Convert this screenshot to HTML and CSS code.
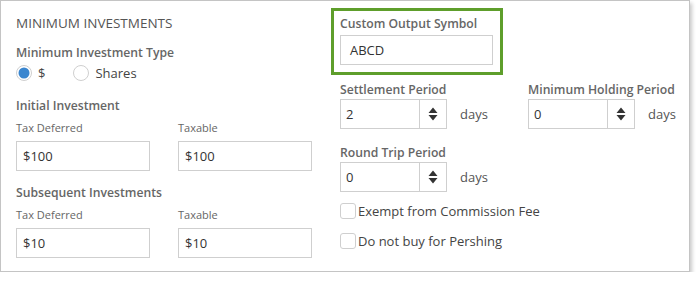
FILE: index.html
```html
<!DOCTYPE html>
<html>
<head>
<meta charset="utf-8">
<link rel="stylesheet" href="styles.css">
</head>
<body>
<div class="panel">
  <div class="left">
    <div class="title">MINIMUM INVESTMENTS</div>
    <div class="heading h-type">Minimum Investment Type</div>
    <div class="radios">
      <label class="radio">
        <svg width="16" height="16" viewBox="0 0 16 16"><circle cx="8" cy="8" r="7.5" fill="#fff" stroke="#cfcfcf"/><circle cx="8" cy="8" r="5.5" fill="#3a86cf"/></svg>
        <span>$</span>
      </label>
      <label class="radio">
        <svg width="16" height="16" viewBox="0 0 16 16"><circle cx="8" cy="8" r="7.5" fill="#fff" stroke="#cfcfcf"/></svg>
        <span>Shares</span>
      </label>
    </div>
    <div class="heading h-init">Initial Investment</div>
    <div class="pair">
      <div class="field">
        <div class="sub">Tax Deferred</div>
        <div class="input">$100</div>
      </div>
      <div class="field">
        <div class="sub">Taxable</div>
        <div class="input">$100</div>
      </div>
    </div>
    <div class="heading h-subs">Subsequent Investments</div>
    <div class="pair">
      <div class="field">
        <div class="sub">Tax Deferred</div>
        <div class="input">$10</div>
      </div>
      <div class="field">
        <div class="sub">Taxable</div>
        <div class="input">$10</div>
      </div>
    </div>
  </div>
  <div class="right">
    <div class="highlight">
      <div class="heading">Custom Output Symbol</div>
      <div class="input wide">ABCD</div>
    </div>
    <div class="grid">
      <div class="col col1">
        <div class="heading">Settlement Period</div>
        <div class="spin-row">
          <div class="spinner"><div class="val">2</div><div class="btn"><svg width="10" height="14" viewBox="0 0 10 14"><path d="M5 0.5 L9.5 6 H0.5 Z M0.5 8 H9.5 L5 13.5 Z" fill="#333"/></svg></div></div>
          <span class="days">days</span>
        </div>
        <div class="heading h-round">Round Trip Period</div>
        <div class="spin-row">
          <div class="spinner"><div class="val">0</div><div class="btn"><svg width="10" height="14" viewBox="0 0 10 14"><path d="M5 0.5 L9.5 6 H0.5 Z M0.5 8 H9.5 L5 13.5 Z" fill="#333"/></svg></div></div>
          <span class="days">days</span>
        </div>
        <label class="check c1"><span class="box"></span><span>Exempt from Commission Fee</span></label>
        <label class="check c2"><span class="box"></span><span>Do not buy for Pershing</span></label>
      </div>
      <div class="col">
        <div class="heading">Minimum Holding Period</div>
        <div class="spin-row">
          <div class="spinner"><div class="val">0</div><div class="btn"><svg width="10" height="14" viewBox="0 0 10 14"><path d="M5 0.5 L9.5 6 H0.5 Z M0.5 8 H9.5 L5 13.5 Z" fill="#333"/></svg></div></div>
          <span class="days">days</span>
        </div>
      </div>
    </div>
  </div>
</div>
</body>
</html>
```

FILE: styles.css
```css
* { box-sizing: border-box; }
body {
  margin: 0;
  background: #fff;
  font-family: "Open Sans", "Noto Sans", sans-serif;
  color: #555;
}
.panel {
  width: 690px;
  height: 272px;
  border: 1px solid #c4c4c4;
  box-shadow: 2px 3px 4px rgba(0,0,0,0.22);
  display: flex;
  background: #fff;
}
.left {
  width: 315px;
  flex-shrink: 0;
  padding: 12px 0 0 15px;
}
.title {
  font-size: 13.5px;
  line-height: 20px;
  color: #555;
}
.heading {
  font-size: 12.2px;
  font-weight: 600;
  line-height: 20px;
  padding-top: 2px;
  margin-bottom: -2px;
  color: #666;
  white-space: nowrap;
}
.h-type { margin-top: 8px; }
.radios {
  display: flex;
  height: 20px;
  align-items: center;
  margin-top: 2px;
}
.radio {
  display: flex;
  align-items: center;
  gap: 6px;
  font-size: 13px;
  color: #444;
  margin-right: 28px;
}
.radio svg { display: block; }
.h-init { margin-top: 11px; }
.h-subs { margin-top: 10px; }
.pair {
  display: flex;
  gap: 28px;
}
.field { width: 134px; }
.sub {
  font-size: 11px;
  line-height: 18px;
  color: #666;
  margin-top: 5px;
  margin-bottom: 4px;
}
.input {
  height: 30px;
  border: 1px solid #cfcfcf;
  padding: 0 6px;
  font-size: 13px;
  line-height: 28px;
  color: #333;
}
.right {
  padding: 7px 0 0 15px;
  flex: 1;
  min-width: 0;
}
.highlight {
  width: 172px;
  border: 3px solid #5e9e2b;
  padding: 1px 7px 7px 6px;
}
.highlight .input { padding: 0 9px; }
.heading + .input { margin-top: 3px; }
.grid {
  display: flex;
  padding-left: 9px;
  margin-top: 3px;
}
.col1 { width: 188px; flex-shrink: 0; }
.spin-row {
  display: flex;
  align-items: center;
  gap: 13px;
  margin-top: 1px;
}
.spinner {
  width: 107px;
  height: 30px;
  border: 1px solid #cfcfcf;
  display: flex;
  flex-shrink: 0;
}
.spinner .val {
  flex: 1;
  padding: 0 5px;
  font-size: 13px;
  line-height: 28px;
  color: #333;
}
.spinner .btn {
  width: 27px;
  border-left: 1px solid #cfcfcf;
  display: flex;
  align-items: center;
  justify-content: center;
}
.spinner .btn svg { display: block; }
.days {
  font-size: 13px;
  color: #555;
}
.h-round { margin-top: 12px; }
.check {
  display: flex;
  align-items: center;
  gap: 2px;
  font-size: 13px;
  color: #444;
  white-space: nowrap;
}
.check .box {
  width: 16px;
  height: 16px;
  border: 1px solid #cfcfcf;
  border-radius: 3px;
  flex-shrink: 0;
}
.c1 { margin-top: 10px; }
.c2 { margin-top: 12px; }
```
